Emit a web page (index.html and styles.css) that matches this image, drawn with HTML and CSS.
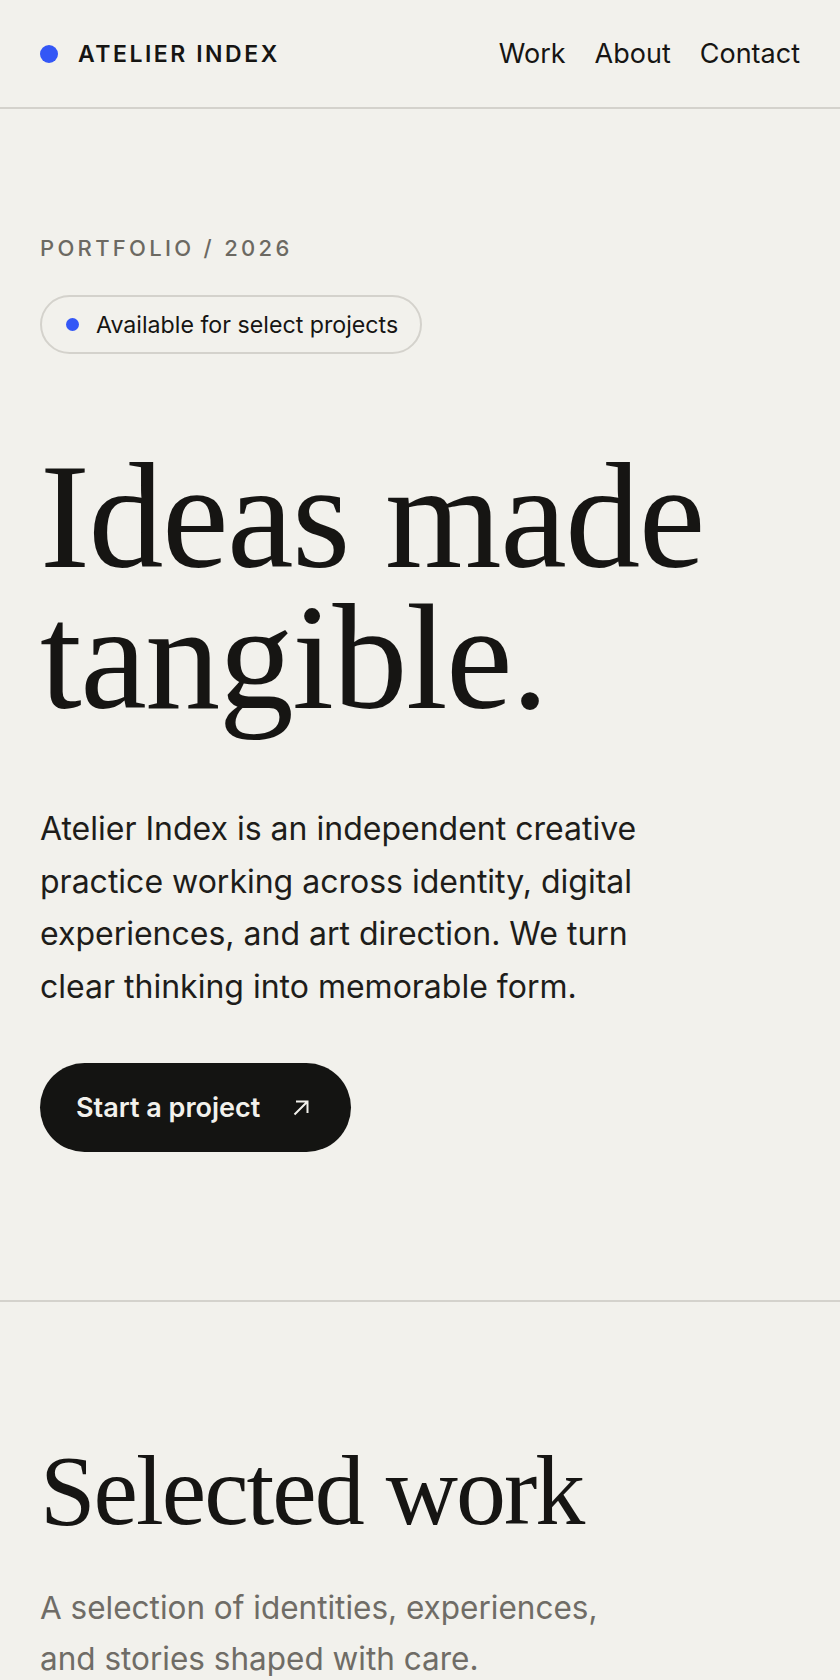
FILE: index.html
```html
<!DOCTYPE html>
<html lang="en">
<head>
	<meta charset="utf-8">
	<title>Atelier Index — Portfolio 2026</title>
	<link rel="stylesheet" href="styles.css">
</head>
<body>
<header class="topbar">
	<a class="brand" href="#"><span class="dot"></span>ATELIER INDEX</a>
	<nav class="nav">
		<a href="#work">Work</a>
		<a href="#about">About</a>
		<a href="#contact">Contact</a>
	</nav>
</header>

<section class="hero">
	<p class="eyebrow">PORTFOLIO / 2026</p>
	<div class="status"><span class="dot small"></span>Available for select projects</div>
	<h1 class="hero-title">Ideas made tangible.</h1>
	<p class="lead">Atelier Index is an independent creative practice working across identity, digital experiences, and art direction. We turn clear thinking into memorable form.</p>
	<a class="btn" href="#contact">
		Start a project
		<svg class="btn-icon" viewBox="0 0 16 16" width="16" height="16" aria-hidden="true"><path d="M1.5 14.5L14.5 1.5M3 1.5h11.5V13" fill="none" stroke="currentColor" stroke-width="2"/></svg>
	</a>
</section>

<section class="work" id="work">
	<h2 class="section-title">Selected work</h2>
	<p class="section-sub">A selection of identities, experiences, and stories shaped with care.</p>
</section>
</body>
</html>
```

FILE: styles.css
```css
html,body{margin:0;padding:0;}
body{background:#f2f1ec;color:#161513;font-family:Inter,Roboto,"Liberation Sans",Arial,sans-serif;}
a{color:inherit;text-decoration:none;}
p,h1,h2{margin:0;}

.topbar{display:flex;align-items:center;justify-content:space-between;height:107px;padding:0 40px;border-bottom:2px solid #d4d2cc;}
.brand{display:flex;align-items:center;gap:20px;font-size:23px;font-weight:600;letter-spacing:.11em;}
.dot{display:inline-block;width:18px;height:18px;border-radius:50%;background:#3457f6;flex:none;}
.dot.small{width:13px;height:13px;}
.nav{display:flex;gap:29px;font-size:27px;}

.hero{padding:123px 40px 148px;border-bottom:2px solid #d4d2cc;}
.eyebrow{font-size:22px;font-weight:500;letter-spacing:.15em;color:#6c6962;line-height:32px;}
.status{display:inline-flex;align-items:center;gap:17px;margin-top:31px;height:55px;padding:0 22px 0 24px;border:2px solid #d4d2cc;border-radius:30px;font-size:23.2px;}
.hero-title{margin-top:92px;font-family:"Liberation Serif","Times New Roman",serif;font-weight:400;font-size:150px;line-height:141px;letter-spacing:-.01em;max-width:740px;}
.lead{margin-top:75px;max-width:640px;font-size:32px;line-height:52.5px;color:#1e1d1a;}
.btn{display:inline-flex;align-items:center;gap:33px;margin-top:50px;height:89px;padding:0 42px 0 36px;border-radius:45px;background:#141412;color:#f2f1ec;font-size:27px;font-weight:600;}
.btn-icon{width:16px;height:16px;}

.work{padding:136px 40px 40px;}
.section-title{font-family:"Liberation Serif","Times New Roman",serif;font-weight:400;font-size:100px;line-height:105px;letter-spacing:-.02em;}
.section-sub{margin-top:39px;max-width:600px;font-size:31.5px;line-height:51px;color:#6f6c66;}
```
